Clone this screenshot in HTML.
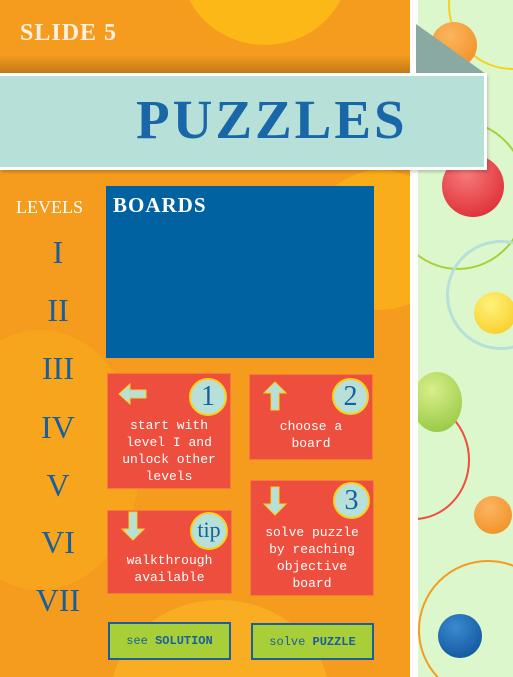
<!DOCTYPE html><html><head><style>
body{margin:0;width:513px;height:677px;overflow:hidden;position:relative;background:#fff;font-family:"Liberation Serif",serif}
div{position:absolute;box-sizing:border-box}
.card{background:#ee4e3e;color:#fff;text-align:center;font-family:"Liberation Mono",monospace;font-size:13px;line-height:17px;border:1px solid #f47b3a}
.circ{border-radius:50%;background:#b6e0d8;border:2px solid #f6d21a;color:#1a5e9c;font-family:"Liberation Serif",serif;text-align:center}
.lv{left:0;width:116px;text-align:center;color:#1a5e9c;font-size:32px;font-family:"Liberation Serif",serif;line-height:34px}
.btn{background:#a8cf38;border:2px solid #1a5e9c;color:#1a5e9c;font-family:"Liberation Mono",monospace;font-size:12px;text-align:center;line-height:34px}
</style></head><body>
<div style="left:0;top:0;width:410px;height:677px;background:#f59c1e;overflow:hidden">
 <div style="left:180px;top:-120px;width:170px;height:165px;border-radius:50%;background:#fbb816"></div>
 <div style="left:310px;top:170px;width:140px;height:140px;border-radius:50%;background:#f9ad1a"></div>
 <div style="left:-60px;top:330px;width:200px;height:260px;border-radius:50%;background:#f7a51c"></div>
 <div style="left:110px;top:600px;width:220px;height:200px;border-radius:50%;background:#f8ad22"></div>
 <div style="left:0;top:55px;width:410px;height:18px;background:linear-gradient(#f59c1e,#c07a18)"></div>
</div>
<div style="left:418px;top:0;width:95px;height:677px;background:#dcf7cc;overflow:hidden">
 <div style="left:30px;top:-60px;width:130px;height:130px;border-radius:50%;border:2px solid #f6d21a"></div>
 <div style="left:-30px;top:120px;width:140px;height:150px;border-radius:50%;border:2px solid #a8cf38"></div>
 <div style="left:28px;top:240px;width:110px;height:110px;border-radius:50%;border:3px solid #b6e0d8"></div>
 <div style="left:-60px;top:400px;width:112px;height:120px;border-radius:50%;border:2px solid #ee4e3e"></div>
 <div style="left:0;top:560px;width:140px;height:140px;border-radius:50%;border:2px solid #f59c1e"></div>
 <div style="left:13px;top:22px;width:46px;height:46px;border-radius:50%;background:radial-gradient(circle at 40% 30%,#fbb560,#f08a1c)"></div>
 <div style="left:24px;top:155px;width:62px;height:62px;border-radius:50%;background:radial-gradient(circle at 40% 30%,#f77a7a,#d81f26)"></div>
 <div style="left:56px;top:292px;width:42px;height:42px;border-radius:50%;background:radial-gradient(circle at 40% 30%,#fff27a,#f6c81a)"></div>
 <div style="left:-6px;top:372px;width:50px;height:60px;border-radius:50%;background:radial-gradient(circle at 40% 30%,#d8ef8a,#8cc23a)"></div>
 <div style="left:56px;top:496px;width:38px;height:38px;border-radius:50%;background:radial-gradient(circle at 40% 30%,#fbb560,#f08a1c)"></div>
 <div style="left:20px;top:614px;width:44px;height:44px;border-radius:50%;background:radial-gradient(circle at 40% 30%,#3a8ad0,#0a4b94)"></div>
</div>
<svg style="position:absolute;left:416px;top:24px" width="72" height="50"><polygon points="0,0 70,50 0,50" fill="#8aa9a2"/></svg>
<div style="left:20px;top:20px;color:#fdf1e0;font-family:'Liberation Serif',serif;font-weight:bold;font-size:24px;letter-spacing:1px">SLIDE 5</div>
<div style="left:0;top:73px;width:487px;height:97px;background:#b6e0d8;border:3px solid #fff;border-left:none;box-shadow:1px 2px 3px rgba(0,0,0,.2)"></div>
<div style="left:136px;top:90px;color:#1a67a8;font-family:'Liberation Serif',serif;font-weight:bold;font-size:55px;letter-spacing:3px;line-height:60px">PUZZLES</div>
<div style="left:106px;top:186px;width:268px;height:172px;background:#0062a1"></div>
<div style="left:113px;top:193px;color:#fff;font-weight:bold;font-size:21px;letter-spacing:1px">BOARDS</div>
<div style="left:16px;top:197px;color:#fff;font-size:18px">LEVELS</div>
<div class="lv" style="top:235px">I</div>
<div class="lv" style="top:293px">II</div>
<div class="lv" style="top:351px">III</div>
<div class="lv" style="top:410px">IV</div>
<div class="lv" style="top:468px">V</div>
<div class="lv" style="top:525px">VI</div>
<div class="lv" style="top:583px">VII</div>
<div class="card" style="left:107px;top:373px;width:124px;height:116px;padding-top:43px">start with<br>level I and<br>unlock other<br>levels</div>
<div class="card" style="left:249px;top:374px;width:124px;height:86px;padding-top:43px">choose a<br>board</div>
<div class="card" style="left:250px;top:480px;width:124px;height:116px;padding-top:43px">solve puzzle<br>by reaching<br>objective<br>board</div>
<div class="card" style="left:107px;top:510px;width:125px;height:84px;padding-top:41px">walkthrough<br>available</div>
<div class="circ" style="left:189px;top:378px;width:38px;height:38px;font-size:28px;line-height:34px">1</div>
<div class="circ" style="left:332px;top:378px;width:37px;height:37px;font-size:28px;line-height:34px">2</div>
<div class="circ" style="left:333px;top:482px;width:37px;height:37px;font-size:28px;line-height:34px">3</div>
<div class="circ" style="left:190px;top:512px;width:38px;height:38px;font-size:22px;line-height:32px">tip</div>
<svg style="position:absolute;left:118px;top:383px" width="30" height="22"><polygon points="1,11 12,1 12,7 28,7 28,15 12,15 12,21" fill="#b6e0d8" stroke="#f6d21a"/></svg>
<svg style="position:absolute;left:263px;top:381px" width="24" height="30"><polygon points="12,1 23,12 16,12 16,29 8,29 8,12 1,12" fill="#b6e0d8" stroke="#f6d21a"/></svg>
<svg style="position:absolute;left:263px;top:486px" width="24" height="30"><polygon points="8,1 16,1 16,18 23,18 12,29 1,18 8,18" fill="#b6e0d8" stroke="#f6d21a"/></svg>
<svg style="position:absolute;left:121px;top:511px" width="24" height="30"><polygon points="8,1 16,1 16,18 23,18 12,29 1,18 8,18" fill="#b6e0d8" stroke="#f6d21a"/></svg>
<div class="btn" style="left:108px;top:622px;width:123px;height:38px">see <b>SOLUTION</b></div>
<div class="btn" style="left:251px;top:623px;width:123px;height:37px">solve <b>PUZZLE</b></div>
</body></html>
